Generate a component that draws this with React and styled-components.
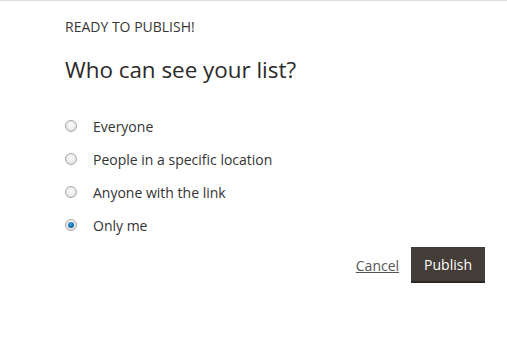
import React, { useState } from "react";
import styled, { createGlobalStyle } from "styled-components";

const Global = createGlobalStyle`
  html, body { margin: 0; padding: 0; background: #fff; }
  body { font-family: "Open Sans", "Liberation Sans", sans-serif; color: #333; }
  * { box-sizing: border-box; }
`;

const Page = styled.div`
  width: 507px;
  height: 339px;
  border-top: 1px solid #dedede;
  padding: 16px 22px 0 65px;
`;

const Eyebrow = styled.div`
  font-size: 14px;
  line-height: 20px;
  color: #3a3633;
  text-transform: uppercase;
`;

const Title = styled.h1`
  margin: 18px 0 31px;
  font-size: 22.4px;
  font-weight: 400;
  line-height: 30px;
  color: #2b2a29;
`;

const Options = styled.div`
  display: flex;
  flex-direction: column;
  gap: 13px;
`;

const Option = styled.label`
  display: flex;
  align-items: center;
  height: 20px;
  font-size: 14px;
  color: #333;
  cursor: pointer;
`;

const Radio = styled.span`
  width: 12px;
  height: 12px;
  border-radius: 50%;
  margin-right: 16px;
  flex: none;
  border: 1px solid #a9a9a9;
  background: radial-gradient(circle at 50% 40%, #fdfdfd 0%, #eaeaea 55%, #d0d0d0 100%);
  display: flex;
  align-items: center;
  justify-content: center;
  &::after {
    content: "";
    width: 6px;
    height: 6px;
    border-radius: 50%;
    display: ${(p) => (p.$checked ? "block" : "none")};
    background: radial-gradient(circle at 40% 35%, #4aa8dc 0%, #146fae 55%, #0a4a7e 100%);
  }
`;

const Actions = styled.div`
  display: flex;
  justify-content: flex-end;
  align-items: center;
  gap: 12px;
  margin-top: 12px;
`;

const CancelLink = styled.a`
  font-size: 14px;
  color: #555;
  text-decoration: underline;
  cursor: pointer;
`;

const PublishButton = styled.button`
  height: 36px;
  padding: 0 13px;
  border: none;
  border-bottom: 2px solid #2d2824;
  background: #443d38;
  color: #fff;
  font-family: "Open Sans", "Liberation Sans", sans-serif;
  font-size: 14px;
  cursor: pointer;
`;

const choices = [
  "Everyone",
  "People in a specific location",
  "Anyone with the link",
  "Only me",
];

export default function App() {
  const [value, setValue] = useState("Only me");
  return (
    <>
      <Global />
      <Page>
        <Eyebrow>Ready to publish!</Eyebrow>
        <Title>Who can see your list?</Title>
        <Options>
          {choices.map((c) => (
            <Option key={c} onClick={() => setValue(c)}>
              <Radio $checked={value === c} />
              {c}
            </Option>
          ))}
        </Options>
        <Actions>
          <CancelLink>Cancel</CancelLink>
          <PublishButton>Publish</PublishButton>
        </Actions>
      </Page>
    </>
  );
}
